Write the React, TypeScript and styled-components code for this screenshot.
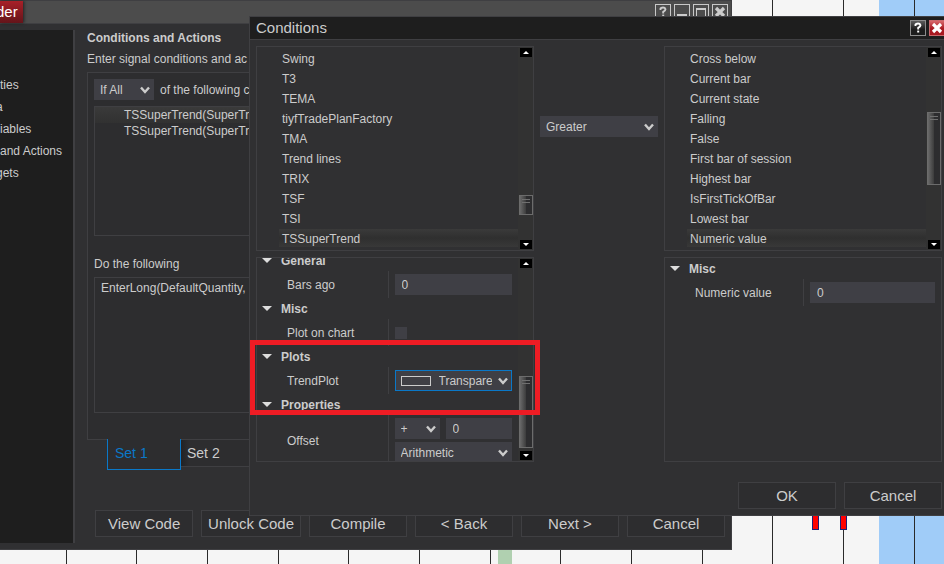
import React from "react";
import styled, { createGlobalStyle, css } from "styled-components";

const color = {
  window: "#303032",
  panel: "#2d2d2f",
  dark: "#1e1e1e",
  line: "#3f3f42",
  field: "#3f3f45",
  text: "#cccccc",
  accent: "#0a78c8",
};

const GlobalStyle = createGlobalStyle`
  * { box-sizing: border-box; }
  body {
    margin: 0;
    overflow: hidden;
    background: #f5f5f5;
    color: ${color.text};
    font: 12px/16px "Liberation Sans", Arial, sans-serif;
  }
  button, input, select { font: inherit; color: inherit; }
`;

const Desktop = styled.div`
  position: relative;
  min-height: 100vh;
  overflow: hidden;
`;

const ChartSurface = styled.svg`
  position: absolute;
  inset: 0;
  width: 100%;
  height: 100%;
`;

const BuilderWindow = styled.section`
  position: absolute;
  top: 0;
  left: 0;
  right: 212px;
  border: solid ${color.line};
  border-width: 1px 1px 1px 0;
  background: ${color.window};
`;

const BuilderTitleBar = styled.header`
  display: flex;
  justify-content: space-between;
  height: 23px;
  border-bottom: 1px solid ${color.line};
  background: #4c4c4c;
`;

const BuilderName = styled.h1`
  margin: 0;
  width: 23px;
  overflow: hidden;
  background: linear-gradient(#a82028, #64141a);
  box-shadow: 1px 0 3px #222222;
  color: #ffffff;
  font-size: 15px;
  font-weight: normal;
  line-height: 22px;
  text-indent: -4px;
`;

const WindowControls = styled.div`
  display: flex;
  gap: 3px;
  padding: 3px 3px 0 0;
`;

const ControlButton = styled.button<{ $tone?: "flat" | "dark" | "red" }>`
  display: grid;
  place-items: center;
  width: 16px;
  height: 16px;
  padding: 0;
  border: 1px solid #c8c8c8;
  background: #4c4c4c;
  ${(p) => p.$tone === "dark" && css`border-color: #8c8c8c; background: linear-gradient(#5c5c5c, #1c1c1c 60%); color: #ffffff;`}
  ${(p) => p.$tone === "red" && css`border-color: #c8686c; background: linear-gradient(#d8686c, #a81820 55%); color: #ffffff;`}
`;

const BuilderBody = styled.div`
  display: flex;
`;

const Steps = styled.nav`
  flex: 0 0 75px;
  margin: 6px 0;
  padding-top: 44px;
  overflow: hidden;
  border-right: 2px solid ${color.line};
  background: ${color.dark};
`;

const Step = styled.a<{ $clipped?: boolean }>`
  display: block;
  color: inherit;
  line-height: 22px;
  text-decoration: none;
  text-indent: ${(p) => (p.$clipped ? "-4px" : "0")};
  white-space: nowrap;
`;

const BuilderMain = styled.main`
  flex: 1;
  min-width: 0;
  padding: 4px 6px 12px 12px;
`;

const SectionTitle = styled.h2`
  margin: 0;
  font-size: 12px;
  line-height: 20px;
`;

const Hint = styled.p`
  margin: 0 0 2px;
  line-height: 22px;
`;

const SetPanel = styled.div`
  padding: 6px 6px 26px;
  border: 1px solid ${color.line};
  background: ${color.panel};
`;

const MatchRow = styled.label`
  display: flex;
  align-items: center;
  gap: 6px;
  margin-bottom: 6px;
`;

const StatementList = styled.ul<{ $tall?: boolean }>`
  height: ${(p) => (p.$tall ? "136px" : "130px")};
  margin: 0;
  padding: ${(p) => (p.$tall ? "2px 0 0 6px" : "0")};
  border: 1px solid ${color.line};
  list-style: none;
`;

const Statement = styled.li<{ $indented?: boolean; $selected?: boolean }>`
  padding-left: ${(p) => (p.$indented ? "29px" : "0")};
  line-height: 16px;
  background: ${(p) => (p.$selected ? "linear-gradient(#3a3a3a, #313131)" : "none")};
`;

const ActionsLabel = styled.h3`
  margin: 20px 0 5px;
  font-size: 12px;
  font-weight: normal;
`;

const Tabs = styled.div`
  display: flex;
  align-items: flex-start;
  height: 31px;
  margin: -1px 0 40px 20px;
`;

const Tab = styled.button<{ $active?: boolean }>`
  width: 74px;
  height: 28px;
  padding: 0 6px;
  border: solid ${color.line};
  border-width: 1px 0;
  background: linear-gradient(90deg, #222224, ${color.panel} 8px);
  font-size: 14px;
  text-align: left;
  ${(p) => p.$active && css`
    height: 31px;
    padding: 0 7px 2px;
    border: 1px solid ${color.accent};
    border-top: 0;
    background: ${color.panel};
    color: ${color.accent};
  `}
`;

const TabFiller = styled.div`
  flex: 1;
  height: 28px;
  border: solid ${color.line};
  border-width: 1px 0;
`;

const ButtonRow = styled.div`
  display: flex;
  justify-content: flex-end;
  gap: 8px;
`;

const PushButton = styled.button`
  min-width: 98px;
  height: 27px;
  padding: 0 6px;
  border: 1px solid ${color.line};
  background: ${color.panel};
  font-size: 15px;
  line-height: 24px;
  white-space: nowrap;
`;

const ConditionsDialog = styled.section`
  position: absolute;
  top: 16px;
  left: 249px;
  right: -5px;
  border: 1px solid ${color.line};
  background: ${color.window};
`;

const DialogTitleBar = styled.header`
  display: flex;
  justify-content: space-between;
  height: 23px;
  padding-left: 6px;
  border-bottom: 1px solid ${color.line};
  background: ${color.dark};
`;

const DialogTitle = styled.h2`
  margin: 0;
  font-size: 15px;
  font-weight: normal;
  line-height: 22px;
`;

const DialogBody = styled.div`
  padding: 6px;
`;

const Columns = styled.div`
  display: grid;
  grid-template-columns: minmax(0, 1fr) 118px minmax(0, 1fr);
  gap: 6px;
  margin-bottom: 20px;
`;

const Operand = styled.div`
  display: grid;
  gap: 6px;
`;

const Operator = styled.div`
  padding-top: 70px;
`;

const Panel = styled.div`
  display: flex;
  height: 205px;
  overflow: hidden;
  border: 1px solid ${color.line};
`;

const Items = styled.ul`
  flex: 1;
  margin: 0;
  padding: 2px 0 0 22px;
  list-style: none;
`;

const Item = styled.li<{ $selected?: boolean }>`
  height: 18px;
  margin-bottom: 2px;
  padding-left: 3px;
  line-height: 20px;
  background: ${(p) => (p.$selected ? "linear-gradient(#3a3a3a, #2f2f2f 50%, #383838)" : "none")};
`;

const Properties = styled.div<{ $scrolled?: boolean }>`
  flex: 1;
  min-width: 0;
  margin-top: ${(p) => (p.$scrolled ? "-8px" : "0")};
`;

const GroupTitle = styled.h3`
  display: flex;
  align-items: center;
  gap: 9px;
  height: 21px;
  margin: 0;
  padding-left: 5px;
  font-size: 12px;
`;

const Property = styled.label`
  display: grid;
  grid-template-columns: minmax(0, 1fr) minmax(0, 1fr);
  align-items: center;
`;

const PropertyName = styled.span`
  padding-left: 30px;
  white-space: nowrap;
`;

const PropertyValue = styled.span`
  display: flex;
  flex-wrap: wrap;
  align-items: center;
  gap: 3px 6px;
  min-height: 27px;
  padding: 3px 6px;
  border-left: 1px solid ${color.line};
`;

const NumberField = styled.input`
  flex: 1;
  min-width: 0;
  width: 40px;
  height: 21px;
  padding: 0 7px;
  border: 0;
  background: ${color.field};
`;

const TickBox = styled.input`
  appearance: none;
  width: 12px;
  height: 12px;
  margin: 0;
  background: ${color.field};
`;

const SelectFrame = styled.span<{ $width: string; $focused?: boolean }>`
  display: grid;
  align-items: center;
  width: ${(p) => p.$width};
  height: 21px;
  background: ${color.field};
  box-shadow: ${(p) => (p.$focused ? `inset 0 0 0 1px ${color.accent}` : "none")};
  > * { grid-area: 1 / 1; }
  > svg { justify-self: end; margin-right: 4px; pointer-events: none; }
`;

const NativeSelect = styled.select<{ $swatch?: boolean }>`
  appearance: none;
  width: 100%;
  height: 21px;
  padding: 0 20px 0 ${(p) => (p.$swatch ? "44px" : "6px")};
  border: 0;
  outline: 0;
  background: transparent;
`;

const Swatch = styled.span`
  width: 30px;
  height: 10px;
  margin-left: 6px;
  border: 1px solid ${color.text};
  pointer-events: none;
`;

const ScrollTrack = styled.div`
  display: flex;
  flex: none;
  flex-direction: column;
  align-items: center;
  width: 15px;
  padding: 1px 0;
  background: #323232;
`;

const ScrollArrow = styled.button`
  display: grid;
  place-items: center;
  width: 12px;
  height: 9px;
  padding: 0;
  border: 0;
  background: #000000;
`;

const ThumbSpace = styled.div<{ $grow: number }>`
  flex: ${(p) => p.$grow} 1 0;
`;

const Thumb = styled.div<{ $length: number }>`
  width: 14px;
  height: ${(p) => p.$length}px;
  padding: 3px 2px;
  border: 1px solid #6c6c6c;
  background: linear-gradient(90deg, #6a6a6a, #3c3c3c 50%, #2d2d2f 51%);
`;

const ThumbGrip = styled.div`
  height: 4px;
  border: solid #707070;
  border-width: 1px 0;
`;

const Highlight = styled.div`
  position: absolute;
  top: 340px;
  left: 250px;
  width: 290px;
  height: 75px;
  border: 5px solid #ee1c24;
  pointer-events: none;
`;

function Chevron() {
  return (
    <svg width="10" height="8" viewBox="0 0 10 8" aria-hidden="true">
      <path d="M1 1.5 5 6 9 1.5" fill="none" stroke="#cccccc" strokeWidth="2.4" />
    </svg>
  );
}

function HelpGlyph() {
  return (
    <svg width="14" height="14" viewBox="0 0 14 14" aria-hidden="true">
      <path d="M4.5 5V3.5Q5 2.5 7 2.5T9.5 4.2Q9.5 5.5 7.2 6.8V8.5" fill="none" stroke="currentColor" strokeWidth="1.9" />
      <path d="M6.2 9.6h2v1.9h-2z" fill="currentColor" />
    </svg>
  );
}

function CloseGlyph() {
  return (
    <svg width="14" height="14" viewBox="0 0 14 14" aria-hidden="true">
      <path d="m3 3 8 8M11 3l-8 8" stroke="currentColor" strokeWidth="3.2" />
    </svg>
  );
}

function MinimizeGlyph() {
  return (
    <svg width="14" height="14" viewBox="0 0 14 14" aria-hidden="true">
      <path d="M2 9h10v2H2z" fill="currentColor" />
    </svg>
  );
}

function MaximizeGlyph() {
  return (
    <svg width="14" height="14" viewBox="0 0 14 14" aria-hidden="true">
      <path d="M2.5 3.5h9v8h-9z" fill="none" stroke="currentColor" />
      <path d="M2 3h10v2H2z" fill="currentColor" />
    </svg>
  );
}

function GroupArrow() {
  return (
    <svg width="10" height="5" viewBox="0 0 10 5" aria-hidden="true">
      <path d="M0 0h10L5 5z" fill="#dddddd" />
    </svg>
  );
}

function Group({ title }: { title: string }) {
  return (
    <GroupTitle>
      <GroupArrow />
      {title}
    </GroupTitle>
  );
}

type DropDownProps = { value: string; label: string; width?: string; swatch?: boolean };

function DropDown({ value, label, width = "100%", swatch }: DropDownProps) {
  return (
    <SelectFrame $width={width} $focused={swatch}>
      {swatch && <Swatch />}
      <NativeSelect aria-label={label} $swatch={swatch}>
        <option>{value}</option>
      </NativeSelect>
      <Chevron />
    </SelectFrame>
  );
}

type ScrollBarProps = { before: number; after: number; length: number };

function ScrollBar({ before, after, length }: ScrollBarProps) {
  return (
    <ScrollTrack>
      <ScrollArrow aria-label="Scroll up">
        <svg width="6" height="3" viewBox="0 0 6 3"><path d="M0 3h6L3 0z" fill="#fff" /></svg>
      </ScrollArrow>
      <ThumbSpace $grow={before} />
      <Thumb $length={length}><ThumbGrip /></Thumb>
      <ThumbSpace $grow={after} />
      <ScrollArrow aria-label="Scroll down">
        <svg width="6" height="3" viewBox="0 0 6 3"><path d="M0 0h6L3 3z" fill="#fff" /></svg>
      </ScrollArrow>
    </ScrollTrack>
  );
}

function ItemList({ items }: { items: string[] }) {
  return (
    <Items>
      {items.map((item, i) => (
        <Item key={item} $selected={i === items.length - 1}>{item}</Item>
      ))}
    </Items>
  );
}

const gridLines = [66, 136, 207, 278, 348, 419, 490, 560, 631, 702, 772, 843, 914];

const indicators = [
  "Swing", "T3", "TEMA", "tiyfTradePlanFactory", "TMA",
  "Trend lines", "TRIX", "TSF", "TSI", "TSSuperTrend",
];

const comparisons = [
  "Cross below", "Current bar", "Current state", "Falling", "False",
  "First bar of session", "Highest bar", "IsFirstTickOfBar", "Lowest bar", "Numeric value",
];

function Chart() {
  return (
    <ChartSurface aria-hidden="true">
      <rect x="879" width="100%" height="100%" fill="#a0ccf8" />
      <rect x="498" width="14" height="100%" fill="#b0d0b0" />
      {gridLines.map((x) => (
        <rect key={x} x={x} width="1" height="100%" fill="#2a2a2a" />
      ))}
      {[812, 840].map((x) => (
        <rect key={x} x={x + 0.5} y="500.5" width="6" height="29" fill="#ff0000" stroke="#1c1c78" />
      ))}
    </ChartSurface>
  );
}

function Builder() {
  return (
    <BuilderWindow>
      <BuilderTitleBar>
        <BuilderName>der</BuilderName>
        <WindowControls>
          <ControlButton aria-label="Help"><HelpGlyph /></ControlButton>
          <ControlButton aria-label="Minimize"><MinimizeGlyph /></ControlButton>
          <ControlButton aria-label="Maximize"><MaximizeGlyph /></ControlButton>
          <ControlButton aria-label="Close"><CloseGlyph /></ControlButton>
        </WindowControls>
      </BuilderTitleBar>
      <BuilderBody>
        <Steps>
          <Step href="#properties">ties</Step>
          <Step href="#data" $clipped>a</Step>
          <Step href="#variables">iables</Step>
          <Step href="#conditions">and Actions</Step>
          <Step href="#targets" $clipped>gets</Step>
        </Steps>
        <BuilderMain>
          <SectionTitle>Conditions and Actions</SectionTitle>
          <Hint>Enter signal conditions and ac</Hint>
          <SetPanel>
            <MatchRow>
              <DropDown value="If All" label="Match" width="60px" />
              of the following c
            </MatchRow>
            <StatementList>
              <Statement $indented $selected>TSSuperTrend(SuperTr</Statement>
              <Statement $indented>TSSuperTrend(SuperTr</Statement>
            </StatementList>
            <ActionsLabel>Do the following</ActionsLabel>
            <StatementList $tall>
              <Statement>EnterLong(DefaultQuantity,</Statement>
            </StatementList>
          </SetPanel>
          <Tabs role="tablist">
            <Tab role="tab" aria-selected="true" $active>Set 1</Tab>
            <Tab role="tab" aria-selected="false">Set 2</Tab>
            <TabFiller />
          </Tabs>
          <ButtonRow>
            <PushButton>View Code</PushButton>
            <PushButton>Unlock Code</PushButton>
            <PushButton>Compile</PushButton>
            <PushButton>&lt; Back</PushButton>
            <PushButton>Next &gt;</PushButton>
            <PushButton>Cancel</PushButton>
          </ButtonRow>
        </BuilderMain>
      </BuilderBody>
    </BuilderWindow>
  );
}

function Conditions() {
  return (
    <ConditionsDialog role="dialog" aria-label="Conditions">
      <DialogTitleBar>
        <DialogTitle>Conditions</DialogTitle>
        <WindowControls>
          <ControlButton aria-label="Help" $tone="dark"><HelpGlyph /></ControlButton>
          <ControlButton aria-label="Close" $tone="red"><CloseGlyph /></ControlButton>
        </WindowControls>
      </DialogTitleBar>
      <DialogBody>
        <Columns>
          <Operand>
            <Panel>
              <ItemList items={indicators} />
              <ScrollBar before={138} after={25} length={20} />
            </Panel>
            <Panel>
              <Properties $scrolled>
                <Group title="General" />
                <Property>
                  <PropertyName>Bars ago</PropertyName>
                  <PropertyValue><NumberField defaultValue="0" /></PropertyValue>
                </Property>
                <Group title="Misc" />
                <Property>
                  <PropertyName>Plot on chart</PropertyName>
                  <PropertyValue><TickBox type="checkbox" /></PropertyValue>
                </Property>
                <Group title="Plots" />
                <Property>
                  <PropertyName>TrendPlot</PropertyName>
                  <PropertyValue><DropDown value="Transparent" label="TrendPlot" swatch /></PropertyValue>
                </Property>
                <Group title="Properties" />
                <Property>
                  <PropertyName>Offset</PropertyName>
                  <PropertyValue>
                    <DropDown value="+" label="Offset sign" width="45px" />
                    <NumberField aria-label="Offset" defaultValue="0" />
                    <DropDown value="Arithmetic" label="Offset type" />
                  </PropertyValue>
                </Property>
              </Properties>
              <ScrollBar before={108} after={3} length={72} />
            </Panel>
          </Operand>
          <Operator>
            <DropDown value="Greater" label="Comparison" />
          </Operator>
          <Operand>
            <Panel>
              <ItemList items={comparisons} />
              <ScrollBar before={55} after={55} length={73} />
            </Panel>
            <Panel>
              <Properties>
                <Group title="Misc" />
                <Property>
                  <PropertyName>Numeric value</PropertyName>
                  <PropertyValue><NumberField defaultValue="0" /></PropertyValue>
                </Property>
              </Properties>
            </Panel>
          </Operand>
        </Columns>
        <ButtonRow>
          <PushButton>OK</PushButton>
          <PushButton>Cancel</PushButton>
        </ButtonRow>
      </DialogBody>
    </ConditionsDialog>
  );
}

export default function App() {
  return (
    <Desktop>
      <GlobalStyle />
      <Chart />
      <Builder />
      <Conditions />
      <Highlight />
    </Desktop>
  );
}
